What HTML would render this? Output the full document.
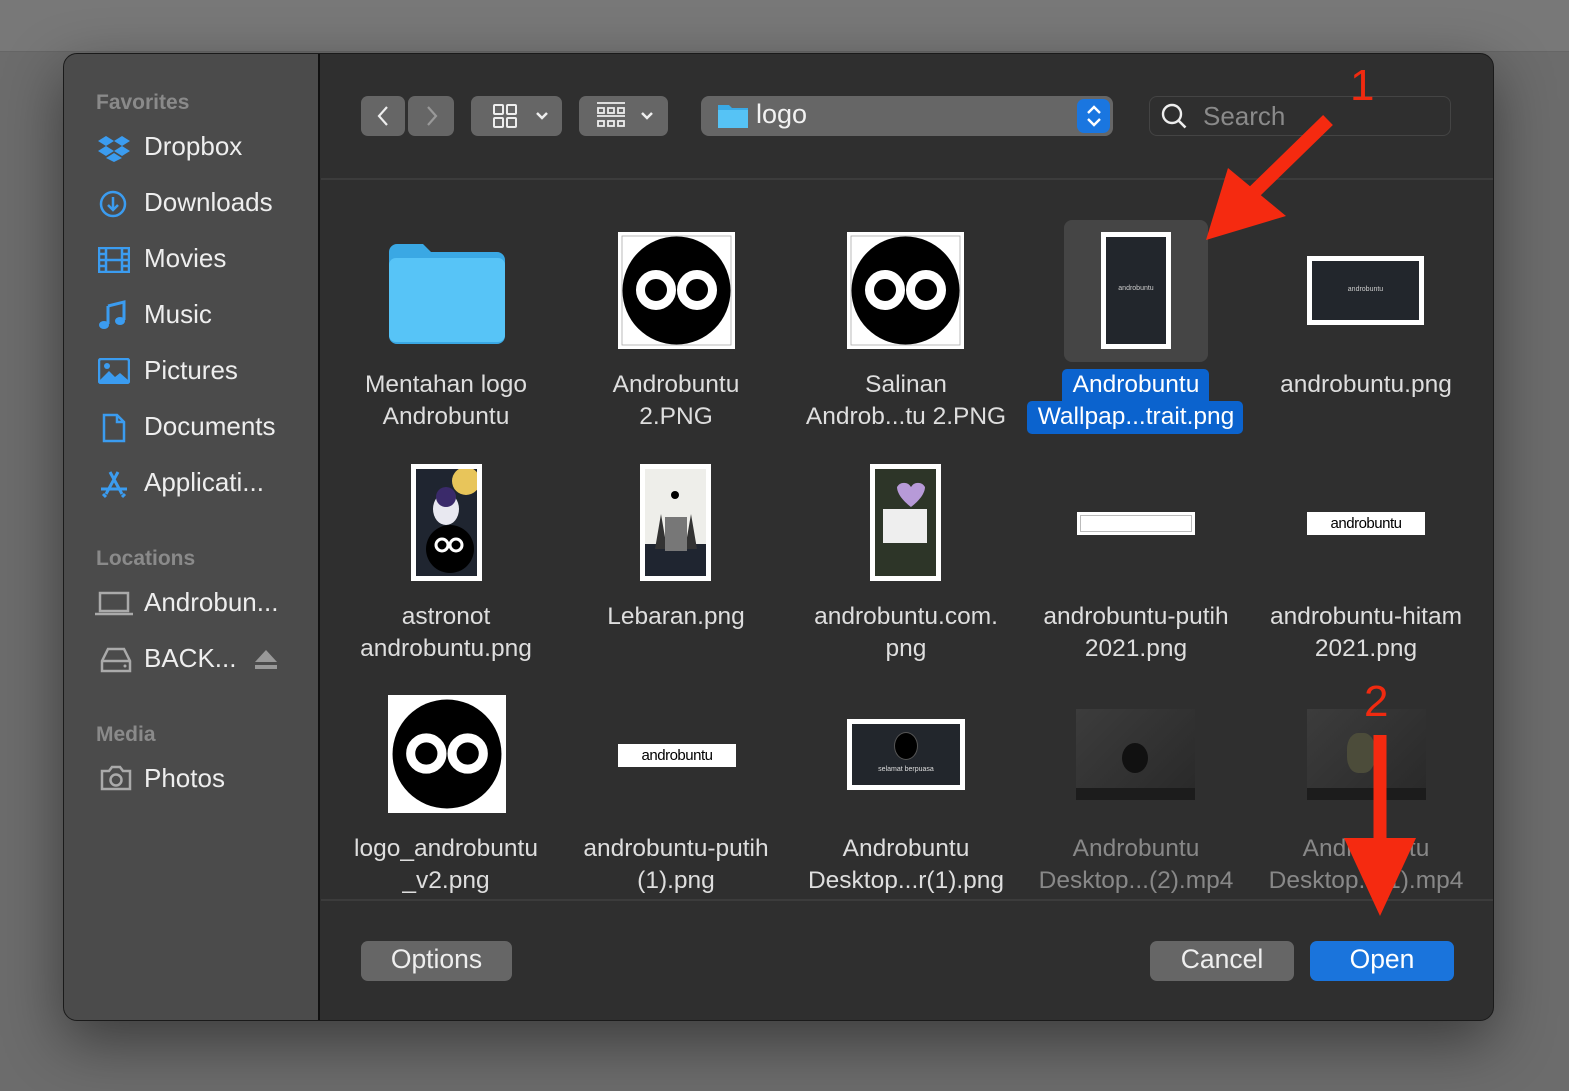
<!DOCTYPE html>
<html><head><meta charset="utf-8"><style>
*{margin:0;padding:0;box-sizing:border-box}
body{width:1569px;height:1091px;overflow:hidden;background:#6c6c6c;font-family:"Liberation Sans",sans-serif;position:relative}
.top{position:absolute;left:0;top:0;width:1569px;height:52px;background:#787878;border-bottom:1px solid #666}
.dlg{position:absolute;left:63px;top:53px;width:1431px;height:968px;border-radius:14px;background:#2f2f2f;border:1px solid #1a1a1a;overflow:hidden;box-shadow:0 20px 60px rgba(0,0,0,.45)}
.side{position:absolute;left:0;top:0;width:256px;height:100%;background:#4b4b4b;border-right:2px solid #111}
.a{position:absolute}
.hd{position:absolute;left:32px;font-size:21px;font-weight:bold;color:#8a8a8a}
.it{position:absolute;left:80px;font-size:26px;color:#eee}
.ic{position:absolute;left:34px}
.btn{position:absolute;background:#666;border-radius:7px}
.lbl{position:absolute;width:250px;text-align:center;font-size:24.5px;line-height:32px;color:#dedede}
.th{position:absolute;background:#fff}
</style></head><body>
<div class="top"></div>
<div class="dlg">
 <div class="side">
  <div class="hd" style="top:37px">Favorites</div>
  <svg class="ic" style="top:80px" width="32" height="28" viewBox="0 0 32 28"><g fill="#3b9cf0"><path d="M8 2l8 5-8 5-8-5z"/><path d="M24 2l8 5-8 5-8-5z"/><path d="M8 12l8 5-8 5-8-5z"/><path d="M24 12l8 5-8 5-8-5z"/><path d="M16 19l8 5-8 4-8-4z"/></g></svg>
  <div class="it" style="top:77px">Dropbox</div>
  <svg class="ic" style="top:135px" width="30" height="30" viewBox="0 0 30 30"><circle cx="15" cy="15" r="12" fill="none" stroke="#3b9cf0" stroke-width="2.5"/><path d="M15 8v13M10 16l5 5 5-5" fill="none" stroke="#3b9cf0" stroke-width="2.5"/></svg>
  <div class="it" style="top:133px">Downloads</div>
  <svg class="ic" style="top:193px" width="32" height="26" viewBox="0 0 32 26"><rect x="1" y="1" width="30" height="24" fill="none" stroke="#3b9cf0" stroke-width="2.5"/><path d="M8 1v24M24 1v24M8 13h16M1 7h7M1 13h7M1 19h7M24 7h7M24 13h7M24 19h7" stroke="#3b9cf0" stroke-width="2.5"/></svg>
  <div class="it" style="top:189px">Movies</div>
  <svg class="ic" style="top:246px" width="30" height="30" viewBox="0 0 30 30"><path d="M10 6l16-4v18" fill="none" stroke="#3b9cf0" stroke-width="3"/><path d="M10 6v18" stroke="#3b9cf0" stroke-width="3"/><ellipse cx="6" cy="25" rx="5" ry="4" fill="#3b9cf0"/><ellipse cx="22" cy="21" rx="5" ry="4" fill="#3b9cf0"/></svg>
  <div class="it" style="top:245px">Music</div>
  <svg class="ic" style="top:304px" width="32" height="26" viewBox="0 0 32 26"><rect x="1" y="1" width="30" height="24" rx="2" fill="none" stroke="#3b9cf0" stroke-width="2.5"/><path d="M2 22l9-9 6 6 5-4 8 7v2H2z" fill="#3b9cf0"/><circle cx="9" cy="8" r="3" fill="#3b9cf0"/></svg>
  <div class="it" style="top:301px">Pictures</div>
  <svg class="ic" style="top:359px;left:38px" width="24" height="30" viewBox="0 0 24 30"><path d="M2 2h13l7 7v19H2z M15 2v7h7" fill="none" stroke="#3b9cf0" stroke-width="2.5"/></svg>
  <div class="it" style="top:357px">Documents</div>
  <svg class="ic" style="top:415px" width="32" height="30" viewBox="0 0 32 30"><path d="M12 3l12 22M20 3L8 25M3 20h26M5 25l3 3M27 25l-3 3" stroke="#3b9cf0" stroke-width="3" fill="none"/></svg>
  <div class="it" style="top:413px">Applicati...</div>
  <div class="hd" style="top:493px">Locations</div>
  <svg class="ic" style="top:537px;left:30px" width="40" height="26" viewBox="0 0 40 26"><rect x="6" y="2" width="28" height="18" fill="none" stroke="#aaa" stroke-width="2.5"/><path d="M1 23h38" stroke="#aaa" stroke-width="2.5"/></svg>
  <div class="it" style="top:533px">Androbun...</div>
  <svg class="ic" style="top:593px;left:36px" width="32" height="26" viewBox="0 0 32 26"><path d="M8 2h16l6 12v10H2V14z M2 14h28" fill="none" stroke="#aaa" stroke-width="2.5"/><circle cx="25" cy="19" r="1.5" fill="#aaa"/></svg>
  <div class="it" style="top:589px">BACK...</div>
  <svg class="a" style="left:190px;top:594px" width="24" height="22" viewBox="0 0 24 22"><path d="M12 2l11 12H1z" fill="#999"/><rect x="1" y="17" width="22" height="4" fill="#999"/></svg>
  <div class="hd" style="top:669px">Media</div>
  <svg class="ic" style="top:711px;left:36px" width="32" height="26" viewBox="0 0 32 26"><path d="M2 6h7l3-4h8l3 4h7v18H2z" fill="none" stroke="#aaa" stroke-width="2.5"/><circle cx="16" cy="15" r="5.5" fill="none" stroke="#aaa" stroke-width="2.5"/></svg>
  <div class="it" style="top:709px">Photos</div>
 </div>
</div>
<!-- toolbar -->
<div class="btn" style="left:361px;top:96px;width:44px;height:40px"></div>
<svg class="a" style="left:373px;top:104px" width="20" height="24"><path d="M14 3L6 12l8 9" fill="none" stroke="#eee" stroke-width="2.2"/></svg>
<div class="btn" style="left:408px;top:96px;width:46px;height:40px"></div>
<svg class="a" style="left:422px;top:104px" width="20" height="24"><path d="M6 3l8 9-8 9" fill="none" stroke="#999" stroke-width="2.2"/></svg>
<div class="btn" style="left:471px;top:96px;width:91px;height:40px"></div>
<svg class="a" style="left:491px;top:103px" width="60" height="26"><g fill="none" stroke="#eee" stroke-width="2"><rect x="3" y="2" width="9" height="9" rx="1"/><rect x="16" y="2" width="9" height="9" rx="1"/><rect x="3" y="15" width="9" height="9" rx="1"/><rect x="16" y="15" width="9" height="9" rx="1"/><path d="M46 10l5 5 5-5" stroke-width="2.5"/></g></svg>
<div class="btn" style="left:579px;top:96px;width:89px;height:40px"></div>
<svg class="a" style="left:595px;top:101px" width="70" height="30"><g fill="none" stroke="#eee" stroke-width="1.8"><path d="M2 2h28M2 15h28"/><rect x="3" y="7" width="6" height="5"/><rect x="13" y="7" width="6" height="5"/><rect x="23" y="7" width="6" height="5"/><rect x="3" y="20" width="6" height="5"/><rect x="13" y="20" width="6" height="5"/><rect x="23" y="20" width="6" height="5"/><path d="M47 12l5 5 5-5" stroke-width="2.5"/></g></svg>
<div class="btn" style="left:701px;top:96px;width:412px;height:40px;border-radius:8px"></div>
<svg class="a" style="left:717px;top:101px" width="32" height="28"><path d="M1 4h11l3 3h16v20H1z" fill="#3aaae6"/><path d="M1 9h30v18H1z" fill="#56c3f5"/></svg>
<div class="a" style="left:756px;top:99px;font-size:27px;color:#f2f2f2">logo</div>
<div class="a" style="left:1077px;top:99px;width:33px;height:34px;background:#1a76e0;border-radius:7px"></div>
<svg class="a" style="left:1083px;top:103px" width="22" height="26"><path d="M5 10l6-6 6 6M5 16l6 6 6-6" fill="none" stroke="#fff" stroke-width="2.4"/></svg>
<div class="a" style="left:1149px;top:96px;width:302px;height:40px;border:1px solid #444;border-radius:8px;background:#2f2f2f"></div>
<svg class="a" style="left:1160px;top:102px" width="30" height="30"><circle cx="12" cy="12" r="9" fill="none" stroke="#eee" stroke-width="2.4"/><path d="M18.5 18.5l7 7" stroke="#eee" stroke-width="2.6"/></svg>
<div class="a" style="left:1203px;top:101px;font-size:26px;color:#8a8a8a">Search</div>
<div class="a" style="left:321px;top:178px;width:1172px;height:2px;background:#3c3c3c"></div>
<div class="a" style="left:321px;top:899px;width:1172px;height:2px;background:#3c3c3c"></div>

<!-- row 1 -->
<svg class="a" style="left:387px;top:242px" width="120" height="102"><path d="M2 10a8 8 0 0 1 8-8h26l8 8h66a8 8 0 0 1 8 8v76a8 8 0 0 1-8 8H10a8 8 0 0 1-8-8z" fill="#3aa8e4"/><rect x="2" y="16" width="116" height="84" rx="7" fill="#57c4f7"/></svg>
<svg class="a" style="left:618px;top:232px" width="117" height="117" viewBox="0 0 117 117"><rect width="117" height="117" fill="#fff"/><rect x="4" y="4" width="109" height="109" fill="none" stroke="#aaa" stroke-width=".8"/><ellipse cx="58.5" cy="58.5" rx="54" ry="54" fill="#000"/><circle cx="38" cy="58" r="15.5" fill="none" stroke="#fff" stroke-width="9"/><circle cx="79" cy="58" r="15.5" fill="none" stroke="#fff" stroke-width="9"/></svg>
<svg class="a" style="left:847px;top:232px" width="117" height="117" viewBox="0 0 117 117"><rect width="117" height="117" fill="#fff"/><rect x="4" y="4" width="109" height="109" fill="none" stroke="#aaa" stroke-width=".8"/><ellipse cx="58.5" cy="58.5" rx="54" ry="54" fill="#000"/><circle cx="38" cy="58" r="15.5" fill="none" stroke="#fff" stroke-width="9"/><circle cx="79" cy="58" r="15.5" fill="none" stroke="#fff" stroke-width="9"/></svg>
<div class="a" style="left:1064px;top:220px;width:144px;height:142px;background:#454545;border-radius:8px"></div>
<div class="th" style="left:1101px;top:232px;width:70px;height:117px;padding:5px"><div style="width:100%;height:100%;background:#22262c;color:#ccc;font-size:7px;text-align:center;padding-top:48px">androbuntu</div></div>
<div class="th" style="left:1307px;top:256px;width:117px;height:69px;padding:5px"><div style="width:100%;height:100%;background:#22262c;color:#ccc;font-size:7px;text-align:center;padding-top:25px">androbuntu</div></div>

<div class="lbl" style="left:321px;top:369px">Mentahan logo<br>Androbuntu</div>
<div class="lbl" style="left:551px;top:369px">Androbuntu<br>2.PNG</div>
<div class="lbl" style="left:771px;top:369px;width:270px">Salinan<br>Androb...tu 2.PNG</div>
<div class="a" style="left:1062px;top:369px;width:147px;height:33px;background:#0b63ce;border-radius:5px 5px 0 0"></div>
<div class="a" style="left:1027px;top:401px;width:216px;height:33px;background:#0b63ce;border-radius:5px"></div>
<div class="lbl" style="left:1011px;top:369px;color:#fff">Androbuntu<br>Wallpap...trait.png</div>
<div class="lbl" style="left:1241px;top:369px">androbuntu.png</div>

<!-- row 2 -->
<div class="th" style="left:411px;top:464px;width:71px;height:117px;padding:5px"><svg width="61" height="107"><rect width="61" height="107" fill="#1f2530"/><circle cx="50" cy="12" r="14" fill="#e8c55a"/><ellipse cx="30" cy="40" rx="13" ry="16" fill="#e8e8f0"/><circle cx="30" cy="28" r="10" fill="#3a2a6a"/><circle cx="34" cy="80" r="24" fill="#000"/><circle cx="26" cy="76" r="6" fill="none" stroke="#fff" stroke-width="3"/><circle cx="40" cy="76" r="6" fill="none" stroke="#fff" stroke-width="3"/></svg></div>
<div class="th" style="left:640px;top:464px;width:71px;height:117px;padding:5px"><svg width="61" height="107"><rect width="61" height="107" fill="#eeeeea"/><rect y="75" width="61" height="32" fill="#1f2530"/><path d="M10 80l6-35 6 35M40 80l6-35 6 35" fill="#333"/><rect x="20" y="48" width="22" height="34" fill="#777"/><circle cx="30" cy="26" r="4" fill="#000"/></svg></div>
<div class="th" style="left:870px;top:464px;width:71px;height:117px;padding:5px"><svg width="61" height="107"><rect width="61" height="107" fill="#2d3528"/><path d="M22 18a8 8 0 0 1 14 0a8 8 0 0 1 14 0c0 10-14 20-14 20s-14-10-14-20z" fill="#b79ad8"/><rect x="8" y="40" width="44" height="34" fill="#eee"/></svg></div>
<div class="th" style="left:1077px;top:512px;width:118px;height:23px;padding:3px"><div style="width:100%;height:100%;border:1px solid #bbb"></div></div>
<div class="th" style="left:1307px;top:512px;width:118px;height:23px;font-size:15px;color:#000;text-align:center;line-height:23px;letter-spacing:-.5px">androbuntu</div>
<div class="lbl" style="left:321px;top:601px">astronot<br>androbuntu.png</div>
<div class="lbl" style="left:551px;top:601px">Lebaran.png</div>
<div class="lbl" style="left:781px;top:601px">androbuntu.com.<br>png</div>
<div class="lbl" style="left:1011px;top:601px">androbuntu-putih<br>2021.png</div>
<div class="lbl" style="left:1241px;top:601px">androbuntu-hitam<br>2021.png</div>

<!-- row 3 -->
<svg class="a" style="left:388px;top:695px" width="118" height="118" viewBox="0 0 117 117"><rect width="117" height="117" fill="#fff"/><ellipse cx="58.5" cy="58.5" rx="54" ry="54" fill="#000"/><circle cx="38" cy="58" r="15.5" fill="none" stroke="#fff" stroke-width="9"/><circle cx="79" cy="58" r="15.5" fill="none" stroke="#fff" stroke-width="9"/></svg>
<div class="th" style="left:618px;top:744px;width:118px;height:23px;font-size:15px;color:#000;text-align:center;line-height:23px;letter-spacing:-.5px">androbuntu</div>
<div class="th" style="left:847px;top:719px;width:118px;height:71px;padding:5px"><div style="width:100%;height:100%;background:#22262c;position:relative"><div style="position:absolute;left:42px;top:8px;width:24px;height:28px;border-radius:50%;background:#000;border:1px solid #555"></div><div style="position:absolute;left:0;right:0;top:42px;font-size:7px;color:#ddd;text-align:center">selamat berpuasa</div></div></div>
<div class="a" style="left:1076px;top:709px;width:119px;height:91px;background:linear-gradient(135deg,#3c3c3c,#2a2a2a);border-bottom:12px solid #1c1c1c"><div style="position:absolute;left:46px;top:34px;width:26px;height:30px;border-radius:50%;background:#111"></div></div>
<div class="a" style="left:1307px;top:709px;width:119px;height:91px;background:linear-gradient(135deg,#3c3c3c,#2a2a2a);border-bottom:12px solid #1c1c1c"><div style="position:absolute;left:40px;top:24px;width:28px;height:40px;border-radius:40%;background:#4c4c3a"></div></div>
<div class="lbl" style="left:321px;top:833px">logo_androbuntu<br>_v2.png</div>
<div class="lbl" style="left:551px;top:833px">androbuntu-putih<br>(1).png</div>
<div class="lbl" style="left:781px;top:833px">Androbuntu<br>Desktop...r(1).png</div>
<div class="lbl" style="left:1011px;top:833px;color:#888">Androbuntu<br>Desktop...(2).mp4</div>
<div class="lbl" style="left:1241px;top:833px;color:#888">Androbuntu<br>Desktop...(1).mp4</div>

<!-- bottom buttons -->
<div class="btn" style="left:361px;top:941px;width:151px;height:40px"></div>
<div class="a" style="left:361px;top:944px;width:151px;text-align:center;font-size:26.5px;color:#eee">Options</div>
<div class="btn" style="left:1150px;top:941px;width:144px;height:40px"></div>
<div class="a" style="left:1150px;top:944px;width:144px;text-align:center;font-size:26.5px;color:#eee">Cancel</div>
<div class="btn" style="left:1310px;top:941px;width:144px;height:40px;background:#1a74dc"></div>
<div class="a" style="left:1310px;top:944px;width:144px;text-align:center;font-size:26.5px;color:#fff">Open</div>

<!-- annotations -->
<svg class="a" style="left:0;top:0" width="1569" height="1091">
 <text x="1350" y="100" font-family="Liberation Sans" font-size="44" fill="#f02a10">1</text>
 <path d="M1328 120L1250 196" stroke="#f52a10" stroke-width="14"/>
 <path d="M1206 240L1228 168 1286 216z" fill="#f52a10"/>
 <text x="1364" y="716" font-family="Liberation Sans" font-size="44" fill="#f02a10">2</text>
 <path d="M1380 735V860" stroke="#f52a10" stroke-width="13"/>
 <path d="M1344 838h72l-36 78z" fill="#f52a10"/>
</svg>
</body></html>
